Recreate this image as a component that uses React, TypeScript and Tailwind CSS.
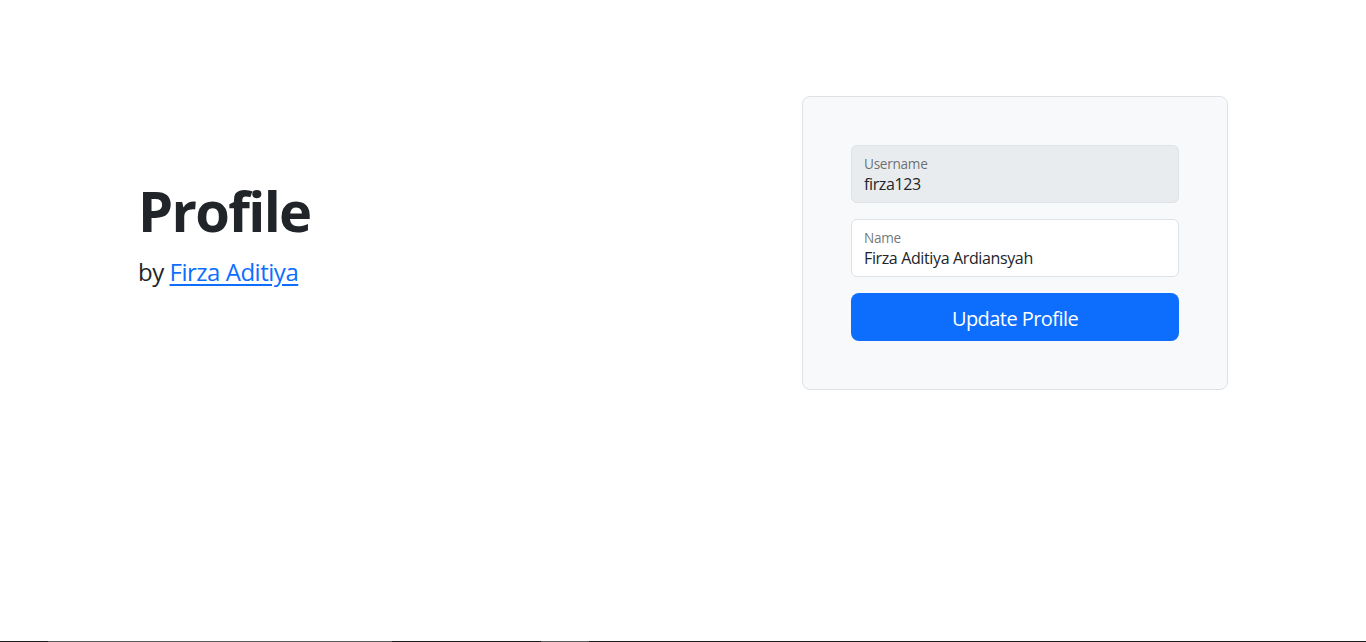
import React from 'react';

const FloatingField: React.FC<{ label: string; value: string; disabled?: boolean }> = ({ label, value, disabled }) => (
  <div className="relative mb-4">
    <input
      type="text"
      value={value}
      readOnly
      disabled={disabled}
      className={`block w-full h-[58px] px-3 pt-[28px] pb-[8px] text-base leading-6 tracking-[-0.023em] text-[#212529] border border-[#dee2e6] rounded-md outline-none ${disabled ? 'bg-[#e9ecef]' : 'bg-white'}`}
    />
    <label className="absolute left-[13px] top-[8.5px] text-[13.6px] leading-[20.4px] tracking-[-0.02em] text-[#212529]/65 pointer-events-none">
      {label}
    </label>
  </div>
);

export default function App() {
  return (
    <div className="h-[642px] flex flex-col bg-white text-[#212529] font-['Open_Sans','Noto_Sans',sans-serif]">
      <div className="flex-1">
        <div className="mx-auto w-[1138px] px-6 py-12">
          <div className="flex items-center py-12 gap-12">
            {/* Left */}
            <div className="flex-1">
              <h1 className="text-[56px] font-bold leading-none mb-4 tracking-[-0.03em] pt-[2px]">Profile</h1>
              <p className="text-2xl leading-9 mb-4 tracking-[-0.02em]">
                by{' '}
                <a href="#" className="text-[#0d6efd] underline underline-offset-[3px]">
                  Firza Aditiya
                </a>
              </p>
            </div>

            {/* Right card */}
            <div className="w-[426px] shrink-0 p-12 border border-[#dee2e6] rounded-lg bg-[#f8f9fa]">
              <FloatingField label="Username" value="firza123" disabled />
              <FloatingField label="Name" value="Firza Aditiya Ardiansyah" />
              <button className="w-full h-12 pt-[4px] rounded-lg bg-[#0d6efd] text-white text-xl leading-[30px] tracking-[-0.028em]">
                Update Profile
              </button>
            </div>
          </div>
        </div>
      </div>

      {/* bottom edge */}
      <div className="h-px flex">
        <div className="w-12 bg-[#1c1c1c]" />
        <div className="w-[344px] bg-[#5a5a5a]" />
        <div className="w-[149px] bg-[#1c1c1c]" />
        <div className="w-12 bg-[#5a5a5a]" />
        <div className="flex-1 bg-[#1c1c1c]" />
      </div>
    </div>
  );
}
